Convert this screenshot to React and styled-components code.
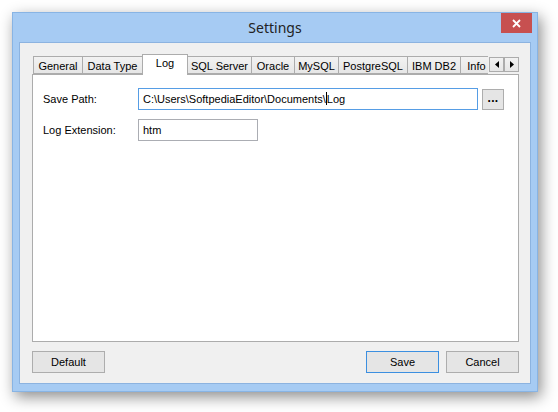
import styled, { createGlobalStyle } from "styled-components";

const GlobalStyle = createGlobalStyle`
  html, body {
    margin: 0;
    padding: 0;
    background: #ffffff;
  }
  body {
    font-family: "Liberation Sans", Arial, sans-serif;
    font-size: 11px;
    color: #000;
  }
`;

const Page = styled.div`
  width: 558px;
  height: 412px;
  padding: 12px 0 0 12px;
  box-sizing: border-box;
`;

const Window = styled.div`
  width: 526px;
  height: 380px;
  box-sizing: border-box;
  display: flex;
  flex-direction: column;
  padding: 0 6px 7px 6px;
  background: #a6cbf3;
  border: 1px solid #88b4e4;
  box-shadow: 3px 5px 14px rgba(0, 0, 0, 0.45);
`;

const TitleBar = styled.div`
  height: 29px;
  margin: 0 -6px;
  display: grid;
  grid-template-columns: 1fr auto 1fr;
  align-items: start;
`;

const Title = styled.div`
  grid-column: 2;
  font-family: "Noto Sans", "Open Sans", sans-serif;
  font-size: 14px;
  line-height: 29px;
  color: #222;
`;

const CloseButton = styled.div`
  grid-column: 3;
  justify-self: end;
  margin-right: 5px;
  width: 31px;
  height: 20px;
  background: #c75050;
  display: flex;
  align-items: center;
  justify-content: center;
`;

const Client = styled.div`
  flex: 1;
  display: flex;
  flex-direction: column;
  background: #f0f0f0;
  border: 1px solid #8cb3e0;
  padding: 11px 11px 10px 12px;
  min-height: 0;
`;

const TabStrip = styled.div`
  height: 21px;
  display: flex;
  padding-left: 1px;
  position: relative;
  z-index: 1;
`;

const TabViewport = styled.div`
  flex: 0 0 455px;
  display: flex;
  align-items: flex-end;
  overflow: hidden;
`;

const Tab = styled.div`
  flex-shrink: 0;
  width: ${(p) => p.$w}px;
  box-sizing: border-box;
  margin-left: ${(p) => (p.$first ? 0 : -1)}px;
  text-align: center;
  white-space: nowrap;
  overflow: hidden;
  border: 1px solid #acacac;
  position: relative;
  ${(p) =>
    p.$active
      ? `
    height: 21px;
    padding-top: 1px;
    line-height: 14px;
    border-bottom: none;
    background: #ffffff;
    z-index: 1;
  `
      : `
    height: 18px;
    margin-bottom: 1px;
    padding-top: 3px;
    line-height: 13px;
    background: linear-gradient(#f2f2f2, #e6e6e6);
  `}
`;

const ScrollArrows = styled.div`
  display: flex;
  margin-top: 3px;
  margin-left: 1px;
`;

const ArrowButton = styled.div`
  width: 15px;
  height: 15px;
  box-sizing: border-box;
  border: 1px solid #acacac;
  background: linear-gradient(#f2f2f2, #e6e6e6);
  display: flex;
  align-items: center;
  justify-content: center;
`;

const Panel = styled.div`
  flex: 1;
  margin-top: -1px;
  background: #ffffff;
  border: 1px solid #acacac;
  padding: 13px 10px 0 10px;
  display: grid;
  grid-template-columns: 95px 1fr;
  grid-auto-rows: 22px;
  row-gap: 9px;
  align-content: start;
  align-items: center;
`;

const Label = styled.div`
  line-height: 22px;
  white-space: nowrap;
`;

const FieldRow = styled.div`
  display: flex;
  align-items: center;
  gap: 4px;
`;

const Field = styled.div`
  width: ${(p) => p.$w}px;
  height: 22px;
  box-sizing: border-box;
  border: 1px solid ${(p) => (p.$focused ? "#569de5" : "#abadb3")};
  background: #fff;
  padding: 0 4px;
  line-height: 20px;
  white-space: nowrap;
  overflow: hidden;
`;

const Caret = styled.span`
  display: inline-block;
  width: 1px;
  height: 13px;
  background: #000;
  vertical-align: -2px;
`;

const DotsButton = styled.div`
  width: 22px;
  height: 21px;
  box-sizing: border-box;
  border: 1px solid #adadad;
  background: #e5e5e5;
  text-align: center;
  font-size: 12px;
  font-weight: bold;
  line-height: 16px;
  letter-spacing: 0.3px;
`;

const Footer = styled.div`
  margin-top: 9px;
  display: flex;
  align-items: center;
  gap: 7px;
`;

const Spacer = styled.div`
  flex: 1;
`;

const Button = styled.div`
  width: 73px;
  height: 22px;
  box-sizing: border-box;
  border: 1px solid ${(p) => (p.$primary ? "#3c8fe0" : "#adadad")};
  background: #e5e5e5;
  text-align: center;
  line-height: 20px;
  color: #000;
`;

const tabs = [
  { label: "General", w: 50 },
  { label: "Data Type", w: 61 },
  { label: "Log", w: 46, active: true },
  { label: "SQL Server", w: 65 },
  { label: "Oracle", w: 44 },
  { label: "MySQL", w: 45 },
  { label: "PostgreSQL", w: 70 },
  { label: "IBM DB2", w: 54 },
  { label: "Info", w: 33 },
];

const App = () => {
  return (
    <>
      <GlobalStyle />
      <Page>
        <Window>
          <TitleBar>
            <Title>Settings</Title>
            <CloseButton>
              <svg width="9" height="9" viewBox="0 0 9 9">
                <path
                  d="M1 1 L8 8 M8 1 L1 8"
                  stroke="#fff"
                  strokeWidth="1.8"
                />
              </svg>
            </CloseButton>
          </TitleBar>

          <Client>
            <TabStrip>
              <TabViewport>
                {tabs.map((t, i) => (
                  <Tab key={t.label} $w={t.w} $active={t.active} $first={i === 0}>
                    {t.label}
                  </Tab>
                ))}
              </TabViewport>
              <ScrollArrows>
                <ArrowButton>
                  <svg width="4" height="7" viewBox="0 0 4 7">
                    <path d="M4 0 L0 3.5 L4 7 Z" fill="#000" />
                  </svg>
                </ArrowButton>
                <ArrowButton>
                  <svg width="4" height="7" viewBox="0 0 4 7">
                    <path d="M0 0 L4 3.5 L0 7 Z" fill="#000" />
                  </svg>
                </ArrowButton>
              </ScrollArrows>
            </TabStrip>

            <Panel>
              <Label>Save Path:</Label>
              <FieldRow>
                <Field $w={340} $focused>
                  C:\Users\SoftpediaEditor\Documents\<Caret />Log
                </Field>
                <DotsButton>...</DotsButton>
              </FieldRow>

              <Label>Log Extension:</Label>
              <FieldRow>
                <Field $w={120}>htm</Field>
              </FieldRow>
            </Panel>

            <Footer>
              <Button>Default</Button>
              <Spacer />
              <Button $primary>Save</Button>
              <Button>Cancel</Button>
            </Footer>
          </Client>
        </Window>
      </Page>
    </>
  );
};

export default App;
